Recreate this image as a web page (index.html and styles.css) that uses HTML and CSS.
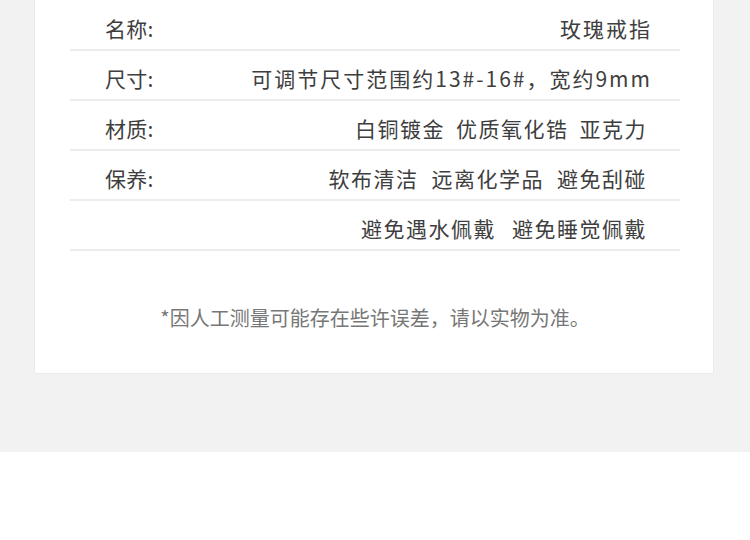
FILE: index.html
```html
<!DOCTYPE html>
<html lang="zh-CN">
<head>
  <meta charset="UTF-8" />
  <title>商品参数</title>
  <link rel="stylesheet" href="styles.css">
</head>
<body>
  <div class="page">
    <div class="card">
      <div class="spec-row wide">
        <span class="label">名称:</span>
        <span class="value">玫瑰戒指</span>
      </div>
      <div class="spec-row wide">
        <span class="label">尺寸:</span>
        <span class="value">可调节尺寸范围约13#-16#，宽约9mm</span>
      </div>
      <div class="spec-row">
        <span class="label">材质:</span>
        <span class="value gap-sm"><span>白铜镀金</span><span>优质氧化锆</span><span>亚克力</span></span>
      </div>
      <div class="spec-row">
        <span class="label">保养:</span>
        <span class="value gap-md"><span>软布清洁</span><span>远离化学品</span><span>避免刮碰</span></span>
      </div>
      <div class="spec-row">
        <span class="label"></span>
        <span class="value gap-lg"><span>避免遇水佩戴</span><span>避免睡觉佩戴</span></span>
      </div>
      <p class="note">*因人工测量可能存在些许误差，请以实物为准。</p>
    </div>
  </div>
</body>
</html>
```

FILE: styles.css
```css
body {
  margin: 0;
  background: #fff;
  font-family: "Noto Sans CJK SC", "Noto Sans", sans-serif;
}
.page {
  background: #f2f2f2;
  height: 452px;
  padding: 0 37px 0 35px;
  box-sizing: border-box;
}
.card {
  background: #fff;
  height: 373px;
  box-sizing: border-box;
  padding: 0 33px 0 35px;
  box-shadow: 0 0 0 1px #ebebeb;
}
.spec-row {
  display: flex;
  justify-content: space-between;
  align-items: center;
  height: 50px;
  box-sizing: border-box;
  padding: 6px 33px 0 35px;
  border-bottom: 2px solid #ececec;
  color: #3e3e3e;
  font-size: 21px;
}
.spec-row:first-child {
  height: 51px;
  padding-top: 6px;
}
.label {
  letter-spacing: 0.3px;
}
.value {
  display: flex;
  letter-spacing: 1.5px;
}
.spec-row.wide {
  padding-right: 28px;
}
.spec-row.wide .value {
  letter-spacing: 2px;
}
.gap-sm { gap: 11px; }
.gap-md { gap: 13px; }
.gap-lg { gap: 16px; }
.note {
  margin: 52px 0 0;
  text-align: center;
  color: #777;
  font-size: 20px;
}
```
